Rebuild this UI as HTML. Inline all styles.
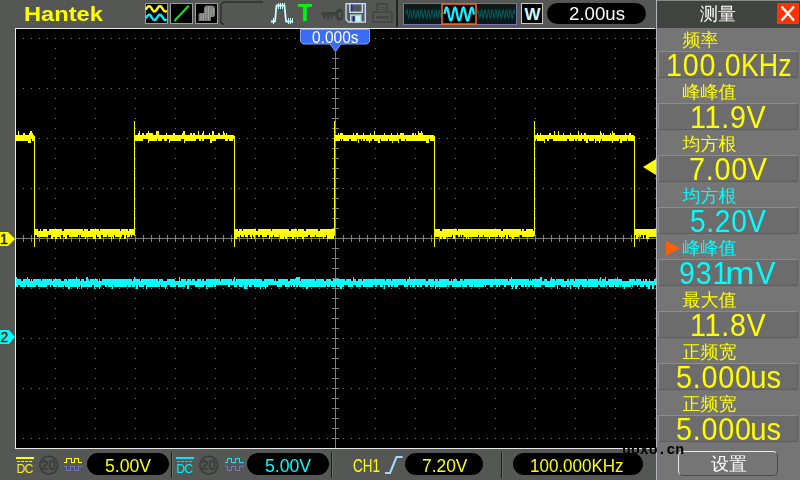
<!DOCTYPE html>
<html lang="zh-CN">
<head>
<meta charset="utf-8">
<title>Hantek</title>
<style>
*{margin:0;padding:0;box-sizing:border-box}
html,body{width:800px;height:480px;overflow:hidden;background:#555755}
body{position:relative;font-family:"Liberation Sans","Noto Sans CJK SC",sans-serif}
.abs{position:absolute}
#plot{position:absolute;left:0;top:0;width:800px;height:480px}
.t{position:absolute;white-space:nowrap;line-height:1}
#brand{top:3.900px;font-size:19.500px;line-height:21px;font-weight:bold;color:#ffff00;transform-origin:0 0}
.pill{position:absolute;background:#000;border-radius:11px;text-align:center;white-space:nowrap}
.ibox{position:absolute;top:3px;width:23px;height:21px;background:#000;border:1px solid #9a9a9a}
/* right panel */
#panel{position:absolute;left:656px;top:0;width:144px;height:480px;background:#757575;border-left:1px solid #b4b4bc}
#ptitle{position:absolute;left:0;top:0;width:143px;height:28px;background:#40443f;border-top:1px solid #8a8a8a}
.lbl{position:absolute;left:25.5px;font-size:18px;line-height:18px;color:#ffff00;white-space:nowrap;font-family:"Liberation Sans","WenQuanYi Zen Hei","Noto Sans CJK SC",sans-serif}
.vbox{position:absolute;left:1px;width:140px;height:27px;background:#6c6c6c;border-top:1px solid #8c8c8c;border-left:1px solid #8c8c8c;border-bottom:1px solid #5e5e5e;border-right:1px solid #5e5e5e;text-align:center;overflow:visible}
.val{position:absolute;left:0;top:-2px;font-size:31px;line-height:32px;color:#ffff00;white-space:nowrap;transform-origin:0 0}
.vn{letter-spacing:0.800px}
.u{display:inline-block;letter-spacing:0;transform-origin:0 0}
.cy{color:#00ffff}
.pb{top:456px;font-size:18px;line-height:20px;transform-origin:0 0}
.pt{font-size:17.500px;line-height:19px;transform-origin:0 0}
#p1{left:104.81px;transform:scaleX(0.9806)}
#p2{left:264.82px;transform:scaleX(0.9801)}
#p3{left:421.64px;transform:scaleX(0.9655)}
#p4{left:530.20px;transform:scaleX(0.9449)}
#ch{left:352.52px;transform:scaleX(0.7467)}
#tp{left:569.14px;transform:scaleX(1.0662)}
#tl{left:311.94px;transform:scaleX(0.9391)}
#brand{left:23.75px;transform:scaleX(1.2129)}
#v1a{left:6.67px;transform:scaleX(0.9250)}
#v1b{margin-left:-0.10px;transform:scaleX(0.9342);visibility:visible}
#v2a{left:31.19px;transform:scaleX(0.9250)}
#v2b{margin-left:-0.33px;transform:scaleX(1.0007);visibility:visible}
#v3a{left:30.16px;transform:scaleX(0.9298)}
#v3b{margin-left:-0.57px;transform:scaleX(1.0124);visibility:visible}
#v4a{left:30.73px;transform:scaleX(0.9051)}
#v4b{margin-left:-0.28px;transform:scaleX(1.0108);visibility:visible}
#v5a{left:19.68px;transform:scaleX(0.9250)}
#v5b{margin-left:-4.23px;transform:scaleX(1.2269);visibility:visible}
#v6a{left:31.19px;transform:scaleX(0.9250)}
#v6b{margin-left:-0.33px;transform:scaleX(1.0007);visibility:visible}
#v7a{left:16.53px;transform:scaleX(0.9286)}
#v7b{margin-left:-1.65px;transform:scaleX(1.0156);visibility:visible}
#v8a{left:16.53px;transform:scaleX(0.9286)}
#v8b{margin-left:-1.65px;transform:scaleX(1.0156);visibility:visible}
#v5c{margin-left:7.67px;transform:scaleX(1.0259);visibility:visible}
</style>
</head>
<body>
<svg id="plot" width="800" height="480" viewBox="0 0 800 480" shape-rendering="crispEdges">
  <rect x="16" y="29" width="640" height="419" fill="#000"/>
  <!-- grid dots -->
  <g stroke="#7e7e7e" stroke-width="1" fill="none">
    <path stroke-dasharray="1 7" d="M23 38.5H655M23 88.5H655M23 138.5H655M23 188.5H655M23 288.5H655M23 338.5H655M23 388.5H655M23 438.5H655"/>
    <path stroke-dasharray="1 9" d="M55.5 48V430M95.5 48V430M135.5 48V430M175.5 48V430M215.5 48V430M255.5 48V430M295.5 48V430M375.5 48V430M415.5 48V430M455.5 48V430M495.5 48V430M535.5 48V430M575.5 48V430M615.5 48V430M655.5 38V440"/>
  </g>
  <!-- axes -->
  <g stroke="#808080" stroke-width="1" fill="none">
    <path d="M16 238.5H656M335.5 52V448"/>
    <path stroke-dasharray="1 7" stroke-width="7" d="M23 238.5H655"/>
    <path stroke-dasharray="1 9" stroke-width="7" d="M335.5 58V440"/>
  </g>
  <!-- border -->
  <path d="M15.5 28V448.5H656M15 28.5H655" stroke="#e8e8e8" stroke-width="1" fill="none"/>
  <!-- waves -->
  <g transform="translate(0.5 0)">
  <path d="M16 277v10M17 279v8M18 279v6M19 279v6M20 279v8M21 281v6M22 281v6M23 279v8M24 279v8M25 279v8M26 279v6M27 277v10M28 279v8M29 279v8M30 281v6M31 279v8M32 281v6M33 279v8M34 279v8M35 279v8M36 279v6M37 279v6M38 279v8M39 279v8M40 279v8M41 281v6M42 279v8M43 279v8M44 279v8M45 279v8M46 279v8M47 279v6M48 279v6M49 279v6M50 279v8M51 279v6M52 281v4M53 279v8M54 279v8M55 279v8M56 279v8M57 279v6M58 279v8M59 279v8M60 279v8M61 281v6M62 281v6M63 281v6M64 279v6M65 279v8M66 279v8M67 281v6M68 279v10M69 279v10M70 279v8M71 279v8M72 279v8M73 279v8M74 279v8M75 279v8M76 277v10M77 279v10M78 279v8M79 279v8M80 281v4M81 279v10M82 279v8M83 279v8M84 281v6M85 281v6M86 277v10M87 277v10M88 279v8M89 281v6M90 279v8M91 279v8M92 279v6M93 279v6M94 279v10M95 279v8M96 279v8M97 279v8M98 281v6M99 279v10M100 281v6M101 281v4M102 279v6M103 279v6M104 279v6M105 279v8M106 279v8M107 279v6M108 279v8M109 279v8M110 279v8M111 279v8M112 279v10M113 279v6M114 279v8M115 279v8M116 279v8M117 279v8M118 279v8M119 279v8M120 279v8M121 279v8M122 279v8M123 279v8M124 279v8M125 279v8M126 279v8M127 279v6M128 279v8M129 279v8M130 279v8M131 279v6M132 281v6M133 279v8M134 277v10M135 279v6M136 279v10M137 279v10M138 279v6M139 279v8M140 281v6M141 279v8M142 279v8M143 279v8M144 279v6M145 279v6M146 279v10M147 279v8M148 279v8M149 279v8M150 279v8M151 279v8M152 279v8M153 279v8M154 279v8M155 279v8M156 279v8M157 279v8M158 281v6M159 279v8M160 279v6M161 279v8M162 279v8M163 281v6M164 281v6M165 281v8M166 281v6M167 279v6M168 279v6M169 279v6M170 279v8M171 279v8M172 279v8M173 279v8M174 279v8M175 281v6M176 281v4M177 281v4M178 281v6M179 277v10M180 281v6M181 279v8M182 279v8M183 279v8M184 279v8M185 279v6M186 281v4M187 279v10M188 279v10M189 279v6M190 279v6M191 281v4M192 279v6M193 279v6M194 279v6M195 281v6M196 281v6M197 279v8M198 279v8M199 279v8M200 279v8M201 281v6M202 279v8M203 279v8M204 281v4M205 281v4M206 279v10M207 279v8M208 279v8M209 279v8M210 279v8M211 279v8M212 279v8M213 279v6M214 279v8M215 279v8M216 279v6M217 279v6M218 279v6M219 279v6M220 281v4M221 279v6M222 279v6M223 279v6M224 279v6M225 279v6M226 279v6M227 279v6M228 279v8M229 279v8M230 279v6M231 279v6M232 281v4M233 279v6M234 277v10M235 281v6M236 279v8M237 279v6M238 279v6M239 279v8M240 279v8M241 279v8M242 279v8M243 279v6M244 279v10M245 279v10M246 279v10M247 279v8M248 279v6M249 279v8M250 279v8M251 279v8M252 279v6M253 279v6M254 279v8M255 279v8M256 279v8M257 279v8M258 279v8M259 279v8M260 279v10M261 279v8M262 281v6M263 281v6M264 279v8M265 279v10M266 279v8M267 279v8M268 279v6M269 279v6M270 279v6M271 279v6M272 279v6M273 279v6M274 281v4M275 279v6M276 281v4M277 281v6M278 279v8M279 279v8M280 279v8M281 279v8M282 279v6M283 279v6M284 279v6M285 279v8M286 279v8M287 279v8M288 281v6M289 281v6M290 279v6M291 279v8M292 279v6M293 279v8M294 279v8M295 279v6M296 277v10M297 277v10M298 277v8M299 277v10M300 281v6M301 279v8M302 279v8M303 279v8M304 279v8M305 279v8M306 279v10M307 279v10M308 279v8M309 279v8M310 279v8M311 279v8M312 279v8M313 279v8M314 279v8M315 281v6M316 279v8M317 279v8M318 279v8M319 279v8M320 279v8M321 279v8M322 279v8M323 279v8M324 281v6M325 281v6M326 279v6M327 279v8M328 279v8M329 279v8M330 279v6M331 281v6M332 281v6M333 279v8M334 279v8M335 279v8M336 279v6M337 279v8M338 279v8M339 279v8M340 279v10M341 279v10M342 279v8M343 279v8M344 279v6M345 281v4M346 279v6M347 279v6M348 279v8M349 279v8M350 279v8M351 281v6M352 281v6M353 277v8M354 279v6M355 279v6M356 281v6M357 281v6M358 279v8M359 279v8M360 279v8M361 279v6M362 281v4M363 279v8M364 279v8M365 279v8M366 279v8M367 279v8M368 279v8M369 279v8M370 279v8M371 279v8M372 279v8M373 279v6M374 279v6M375 279v8M376 279v8M377 279v6M378 279v6M379 279v6M380 279v8M381 279v8M382 279v8M383 279v6M384 279v10M385 281v4M386 279v6M387 279v6M388 279v8M389 279v8M390 279v6M391 281v6M392 279v8M393 279v6M394 279v8M395 279v8M396 279v8M397 279v8M398 279v6M399 279v6M400 279v6M401 279v6M402 279v6M403 279v6M404 279v8M405 279v8M406 281v6M407 279v8M408 279v6M409 277v8M410 279v8M411 279v6M412 279v8M413 279v8M414 279v8M415 279v6M416 279v6M417 279v8M418 279v8M419 279v6M420 279v8M421 279v8M422 279v6M423 279v6M424 279v6M425 279v8M426 281v6M427 281v6M428 279v6M429 279v6M430 279v8M431 279v8M432 279v8M433 279v8M434 281v4M435 279v10M436 279v8M437 279v8M438 281v6M439 279v8M440 279v8M441 279v8M442 279v8M443 279v8M444 279v8M445 279v8M446 279v8M447 279v6M448 279v8M449 281v4M450 281v4M451 279v6M452 281v6M453 279v8M454 279v8M455 279v8M456 279v8M457 281v6M458 281v6M459 281v6M460 279v8M461 279v6M462 279v8M463 281v6M464 279v8M465 279v8M466 279v8M467 279v6M468 279v6M469 279v8M470 279v8M471 279v8M472 279v8M473 279v6M474 279v8M475 279v8M476 279v8M477 279v8M478 279v8M479 279v8M480 279v8M481 279v8M482 279v8M483 279v8M484 279v6M485 279v8M486 279v6M487 279v6M488 279v6M489 279v6M490 279v8M491 279v8M492 279v8M493 279v6M494 279v6M495 279v6M496 279v8M497 279v8M498 279v6M499 279v8M500 279v6M501 279v6M502 279v6M503 279v6M504 279v8M505 279v8M506 279v6M507 279v6M508 281v4M509 279v6M510 279v6M511 277v10M512 279v10M513 279v8M514 279v6M515 279v10M516 279v10M517 279v8M518 279v6M519 279v6M520 279v6M521 279v8M522 279v8M523 279v8M524 279v6M525 279v8M526 279v8M527 279v6M528 279v8M529 281v6M530 279v6M531 281v4M532 279v8M533 279v6M534 279v8M535 279v8M536 279v8M537 279v8M538 279v8M539 279v8M540 277v10M541 277v8M542 281v4M543 281v4M544 279v6M545 279v8M546 279v8M547 281v6M548 281v6M549 281v6M550 279v8M551 277v10M552 279v8M553 279v8M554 279v8M555 281v4M556 279v6M557 279v10M558 279v6M559 279v6M560 279v6M561 279v8M562 279v8M563 279v8M564 281v6M565 281v6M566 281v4M567 279v8M568 279v8M569 281v4M570 279v10M571 279v6M572 279v6M573 279v8M574 281v6M575 279v8M576 279v8M577 279v8M578 279v10M579 279v8M580 279v6M581 279v6M582 279v8M583 279v8M584 279v8M585 279v8M586 279v8M587 281v4M588 279v8M589 279v8M590 279v8M591 279v8M592 279v8M593 279v8M594 279v8M595 279v8M596 279v8M597 279v8M598 281v4M599 279v6M600 277v10M601 281v6M602 279v8M603 279v8M604 279v8M605 277v8M606 281v6M607 281v4M608 279v6M609 279v8M610 279v8M611 279v8M612 279v8M613 279v8M614 279v6M615 279v8M616 279v8M617 277v10M618 279v8M619 279v6M620 279v8M621 279v6M622 281v6M623 281v6M624 281v8M625 281v6M626 281v6M627 281v6M628 281v6M629 279v8M630 279v8M631 279v6M632 279v8M633 279v6M634 279v6M635 281v4M636 279v6M637 279v8M638 279v6M639 279v6M640 279v8M641 281v6M642 281v6M643 279v8M644 281v4M645 279v6M646 279v8M647 281v6M648 281v8M649 279v10M650 281v4M651 281v4M652 281v8M653 281v8M654 279v6M655 279v6" stroke="#00ffff" stroke-width="1" fill="none"/>
  <path d="M16 135v6M17 135v6M18 131v10M19 135v6M20 135v6M21 135v6M22 135v6M23 133v8M24 133v8M25 135v6M26 135v6M27 135v6M28 135v8M29 133v10M30 131v12M31 131v8M32 133v8M33 135v6M35 229v6M36 229v6M37 229v8M38 231v6M39 231v6M40 229v8M41 231v6M42 231v6M43 229v8M44 229v8M45 229v8M46 229v8M47 231v6M48 231v4M49 229v6M50 229v6M51 229v10M52 229v10M53 229v8M54 229v8M55 229v10M56 229v10M57 229v8M58 229v8M59 229v8M60 229v10M61 229v6M62 231v4M63 231v6M64 229v8M65 229v10M66 229v10M67 229v6M68 229v6M69 229v8M70 229v8M71 229v8M72 229v8M73 229v8M74 229v8M75 229v8M76 229v8M77 229v8M78 229v6M79 229v6M80 229v6M81 229v8M82 229v8M83 231v6M84 229v8M85 229v10M86 229v8M87 229v8M88 231v6M89 231v6M90 229v8M91 229v8M92 229v8M93 229v10M94 229v10M95 229v10M96 229v6M97 229v8M98 229v8M99 231v8M100 229v10M101 229v6M102 229v6M103 229v8M104 229v8M105 229v8M106 229v8M107 229v6M108 229v8M109 229v8M110 229v8M111 229v10M112 229v8M113 229v10M114 229v6M115 229v8M116 229v8M117 229v8M118 229v8M119 229v8M120 231v8M121 229v8M122 229v6M123 229v6M124 229v10M125 229v10M126 229v6M127 229v8M128 231v6M129 229v8M130 229v6M131 229v8M132 229v6M133 229v6M135 135v6M136 135v6M137 135v6M138 133v8M139 131v10M140 135v6M141 135v6M142 133v8M143 133v6M144 135v4M145 135v4M146 133v6M147 133v6M148 131v12M149 133v8M150 133v8M151 133v8M152 133v8M153 135v6M154 135v6M155 135v6M156 131v10M157 131v8M158 131v10M159 135v6M160 135v6M161 135v6M162 135v4M163 135v4M164 135v6M165 135v6M166 133v8M167 135v4M168 135v4M169 135v8M170 135v6M171 135v6M172 135v6M173 133v8M174 133v8M175 135v6M176 135v6M177 135v6M178 135v6M179 135v6M180 135v6M181 135v4M182 133v6M183 131v8M184 131v12M185 135v6M186 135v6M187 135v6M188 135v6M189 135v6M190 133v8M191 133v8M192 135v6M193 133v8M194 133v8M195 135v6M196 135v4M197 135v4M198 131v8M199 135v6M200 135v6M201 135v4M202 133v8M203 131v10M204 135v4M205 135v4M206 135v4M207 135v4M208 135v4M209 133v6M210 135v8M211 135v8M212 131v10M213 131v10M214 135v6M215 135v6M216 135v4M217 135v4M218 133v6M219 133v6M220 135v4M221 135v4M222 135v4M223 131v8M224 133v6M225 135v6M226 133v8M227 135v6M228 135v4M229 135v6M230 135v6M231 135v6M232 135v6M233 135v4M235 229v10M236 229v10M237 229v8M238 231v6M239 229v8M240 229v6M241 229v8M242 231v6M243 229v8M244 229v6M245 229v8M246 229v8M247 229v8M248 229v6M249 229v6M250 229v8M251 229v10M252 229v6M253 229v8M254 229v10M255 229v6M256 231v4M257 231v4M258 229v8M259 229v8M260 229v6M261 229v6M262 229v8M263 229v8M264 229v8M265 229v8M266 229v8M267 229v6M268 229v6M269 229v10M270 229v8M271 231v6M272 229v8M273 229v6M274 229v8M275 229v8M276 229v8M277 229v8M278 229v8M279 229v6M280 229v10M281 229v10M282 229v10M283 229v10M284 229v8M285 229v10M286 229v10M287 229v8M288 229v8M289 231v6M290 231v6M291 229v8M292 229v10M293 229v10M294 229v8M295 229v8M296 229v8M297 231v8M298 229v8M299 229v8M300 229v8M301 229v8M302 229v10M303 229v10M304 231v6M305 231v6M306 229v8M307 229v8M308 229v6M309 229v6M310 229v8M311 229v8M312 229v8M313 229v8M314 229v8M315 229v6M316 229v8M317 229v8M318 231v6M319 231v6M320 229v8M321 229v8M322 229v8M323 229v10M324 229v8M325 229v8M326 229v6M327 229v10M328 229v10M329 229v10M330 229v10M331 229v10M332 229v10M333 229v10M335 135v6M336 135v6M337 135v6M338 133v8M339 135v6M340 133v6M341 133v8M342 133v6M343 135v6M344 135v6M345 135v6M346 135v6M347 135v6M348 135v6M349 135v4M350 135v4M351 135v6M352 135v6M353 133v8M354 135v6M355 135v6M356 133v8M357 133v6M358 135v8M359 135v4M360 135v4M361 135v6M362 135v4M363 133v8M364 135v6M365 135v4M366 135v6M367 135v6M368 135v6M369 135v8M370 133v8M371 135v6M372 135v4M373 135v4M374 131v10M375 135v6M376 135v6M377 135v6M378 135v8M379 135v8M380 135v4M381 135v6M382 135v6M383 135v6M384 133v8M385 135v6M386 135v6M387 135v6M388 135v4M389 135v6M390 135v6M391 133v8M392 135v8M393 135v6M394 135v6M395 135v6M396 135v6M397 133v8M398 135v8M399 135v4M400 133v6M401 133v8M402 133v8M403 133v8M404 135v6M405 135v4M406 135v6M407 135v6M408 135v6M409 135v6M410 135v6M411 135v6M412 133v8M413 133v8M414 135v6M415 133v8M416 135v6M417 135v6M418 131v10M419 133v8M420 133v8M421 131v10M422 133v8M423 135v6M424 135v6M425 135v6M426 135v8M427 135v8M428 135v8M429 135v4M430 135v6M431 135v6M432 135v6M433 135v6M435 229v8M436 229v8M437 229v8M438 229v8M439 229v8M440 231v8M441 231v8M442 229v8M443 229v10M444 229v10M445 229v10M446 229v8M447 229v8M448 229v8M449 229v8M450 229v8M451 229v8M452 229v6M453 229v10M454 229v10M455 229v6M456 229v6M457 231v4M458 229v8M459 229v8M460 229v6M461 229v8M462 229v6M463 229v6M464 229v8M465 229v8M466 229v10M467 229v8M468 229v10M469 229v8M470 229v8M471 229v8M472 229v8M473 229v8M474 229v8M475 229v8M476 229v8M477 229v8M478 229v6M479 229v8M480 229v8M481 229v8M482 229v8M483 229v6M484 229v8M485 229v8M486 229v8M487 229v8M488 229v8M489 229v10M490 229v8M491 229v8M492 229v8M493 229v8M494 229v8M495 229v8M496 229v8M497 229v8M498 229v6M499 229v8M500 229v8M501 231v8M502 231v6M503 229v8M504 229v8M505 229v6M506 229v10M507 229v10M508 229v6M509 229v8M510 229v8M511 229v8M512 229v10M513 229v10M514 229v8M515 229v8M516 229v8M517 229v8M518 229v8M519 229v6M520 229v6M521 231v4M522 229v8M523 229v8M524 231v6M525 231v6M526 229v8M527 229v8M528 229v8M529 229v8M530 229v8M531 229v8M532 229v8M533 231v6M535 135v6M536 135v4M537 133v8M538 135v6M539 135v6M540 133v8M541 135v6M542 135v6M543 135v6M544 135v8M545 135v4M546 135v4M547 135v6M548 135v6M549 133v6M550 133v6M551 135v4M552 135v4M553 135v6M554 131v10M555 135v6M556 135v6M557 135v6M558 131v10M559 135v6M560 135v6M561 135v6M562 135v6M563 133v8M564 135v6M565 135v6M566 135v6M567 135v4M568 135v4M569 135v6M570 133v8M571 135v6M572 135v6M573 135v6M574 135v4M575 135v6M576 135v6M577 135v4M578 131v10M579 135v6M580 135v6M581 133v8M582 135v4M583 135v4M584 133v8M585 133v8M586 135v8M587 135v8M588 135v4M589 135v6M590 135v6M591 135v6M592 135v6M593 135v6M594 135v4M595 135v8M596 135v6M597 135v6M598 135v6M599 135v8M600 131v10M601 133v6M602 135v6M603 133v8M604 135v6M605 135v6M606 135v6M607 135v6M608 135v6M609 135v6M610 133v8M611 135v6M612 131v12M613 133v8M614 133v8M615 135v6M616 135v6M617 135v6M618 135v6M619 135v4M620 135v8M621 135v8M622 135v6M623 135v6M624 135v6M625 133v8M626 135v6M627 135v4M628 135v6M629 133v8M630 133v8M631 135v6M632 135v6M633 135v6M635 229v6M636 229v10M637 229v10M638 229v8M639 229v6M640 229v8M641 229v6M642 229v6M643 229v10M644 229v6M645 229v6M646 229v10M647 229v10M648 229v10M649 229v8M650 229v8M651 229v8M652 229v8M653 229v8M654 229v8M655 229v8M34 136v111M134 121v115M234 136v111M334 121v115M434 136v111M534 121v115M634 136v111" stroke="#ffff00" stroke-width="1" fill="none"/>
  </g>
  <!-- channel markers -->
  <polygon points="0,232 8,232 15,239 8,246 0,246" fill="#ffff00" shape-rendering="auto"/>
  <polygon points="0,330 9,330 15,337 9,344 0,344" fill="#00ffff" shape-rendering="auto"/>
  <!-- trigger level arrow -->
  <polygon points="643,167 656,159 656,175" fill="#ffff00" shape-rendering="auto"/>
  <!-- time marker -->
  <g shape-rendering="auto">
  <polygon points="300.5,29.5 369.5,29.5 369.5,41.5 367,44 341,44 335.5,51.5 330,44 303,44 300.5,41.5" fill="#3c6cf4" stroke="#78a8ff" stroke-width="1"/>
  </g>
</svg>
<div class="t" style="left:0px;top:232px;font-size:14px;color:#1c1c40;line-height:15px;-webkit-text-stroke:0.500px #1c1c40">1</div>
<div class="t" style="left:0.500px;top:330px;font-size:14px;color:#4a2c1c;line-height:15px;-webkit-text-stroke:0.500px #4a2c1c">2</div>
<div class="t" id="tl" style="top:28.700px;font-size:16.500px;line-height:17px;color:#fff;transform-origin:0 0">0.000s</div>

<div class="t" id="brand">Hantek</div>

<!-- top icons -->
<svg class="abs" style="left:0;top:0" width="800" height="28" viewBox="0 0 800 28">
  <!-- icon boxes -->
  <g shape-rendering="crispEdges">
    <rect x="145.5" y="3.5" width="22" height="20" fill="#000" stroke="#9c9c9c"/>
    <rect x="170.5" y="3.5" width="22" height="20" fill="#000" stroke="#9c9c9c"/>
    <rect x="195.5" y="3.5" width="22" height="20" fill="#000" stroke="#9c9c9c"/>
  </g>
  <path d="M146.4 8.8L146.9 8.0L147.4 7.3L147.9 6.7L148.4 6.3L148.9 6.1L149.4 6.1L149.9 6.4L150.4 6.8L150.9 7.4L151.4 8.2L151.9 9.0L152.4 9.7L152.9 10.4L153.4 11.0L153.9 11.3L154.4 11.5L154.9 11.4L155.4 11.1L155.9 10.7L156.4 10.0L156.9 9.3L157.4 8.5L157.9 7.7L158.4 7.1L158.9 6.5L159.4 6.2L159.9 6.1L160.4 6.2L160.9 6.5L161.4 7.1L161.9 7.7L162.4 8.5L162.9 9.3L163.4 10.0L163.9 10.7L164.4 11.1L164.9 11.4L165.4 11.5L165.9 11.3" stroke="#ffff00" stroke-width="2.4" fill="none" stroke-linecap="round"/>
  <path d="M146.4 17.4L146.9 16.6L147.4 15.9L147.9 15.3L148.4 14.9L148.9 14.7L149.4 14.7L149.9 15.0L150.4 15.4L150.9 16.0L151.4 16.8L151.9 17.6L152.4 18.3L152.9 19.0L153.4 19.6L153.9 19.9L154.4 20.1L154.9 20.0L155.4 19.7L155.9 19.3L156.4 18.6L156.9 17.9L157.4 17.1L157.9 16.3L158.4 15.7L158.9 15.1L159.4 14.8L159.9 14.7L160.4 14.8L160.9 15.1L161.4 15.7L161.9 16.3L162.4 17.1L162.9 17.9L163.4 18.6L163.9 19.3L164.4 19.7L164.9 20.0L165.4 20.1L165.9 19.9" stroke="#00f0ff" stroke-width="2.4" fill="none" stroke-linecap="round"/>
  <path d="M175 20.300L188.200 6.200" stroke="#00f010" stroke-width="2" stroke-linecap="round" fill="none"/>
  <defs><filter id="bl" x="-20%" y="-20%" width="140%" height="140%"><feGaussianBlur stdDeviation="0.55"/></filter></defs>
  <g filter="url(#bl)">
    <path d="M198.500 21V14.500c0-1 1-1.500 2-1.500h3.500V9c0-2 1-3.500 3-3.500h5c2 0 3 1 3 3v6.500c0 1.500-1 2-2.500 2H211v3c0 .600-.400 1-1 1z" fill="#7a7a7a"/>
    <path d="M201 20v-6M203.500 20V13M206 18V7M208.500 20V6M211 17V6.500M213.500 15V8" stroke="#a8a8a8" stroke-width="0.900" fill="none"/>
  </g>
  <!-- empty inset -->
  <path d="M224 24.500a3.500 3.500 0 0 1 -3-3.500V6a4 4 0 0 1 4-4H263" stroke="#2e302e" stroke-width="1.500" fill="none"/>
  <!-- pulse icon -->
  <g stroke="#c8ffff" fill="none">
    <path d="M271 21.500H275L276.500 5.500H284.500L286 21.500H292.500" stroke-width="1.800" stroke-linejoin="round"/>
    <path d="M273.500 18v6M278.500 3v6M280.500 3v6M282.500 3v6M284.500 3v5M288.500 18v6M290.500 18v6M292.500 18v5" stroke-width="1" shape-rendering="crispEdges"/>
  </g>
  <!-- key -->
  <g fill="#3e403e" stroke="none">
    <rect x="322" y="12" width="15" height="3.400"/>
    <path d="M320.500 13.700L323 12V15.400z"/>
    <rect x="323.500" y="14" width="2.200" height="4.800"/><rect x="327" y="14" width="2.200" height="5.800"/><rect x="330.500" y="14" width="2.200" height="4.800"/>
    <path d="M339.500 8.700c-2.500 0-4.300 2.500-4.300 6s1.800 6 4.300 6s4-2.500 4-6s-1.500-6-4-6zm0.300 3.300c0.800 0 1.300 1.200 1.300 2.700s-.5 2.700-1.300 2.700s-1.300-1.200-1.300-2.700s.5-2.700 1.300-2.700z" fill-rule="evenodd"/>
  </g>
  <!-- floppy -->
  <g fill="none" stroke="#6464cc" stroke-width="0.900">
    <path d="M347 4.700H364.300V21.200H349L347 19.200Z"/>
    <path d="M350.800 4V11.400H361.400V4"/>
    <path d="M351.700 22V16.300H359.800"/>
  </g>
  <g fill="none" stroke="#c8e8e4" stroke-width="1.300">
    <path d="M346 3.700H365.300V22.100H348.500L346 19.600Z"/>
    <path d="M349.800 3.700V12.400H362.400V3.700"/>
    <path d="M350.700 22V15.200H360.900V22"/>
  </g>
  <rect x="355.200" y="15.800" width="5.200" height="6" fill="#c0f8f8"/>
  <rect x="351" y="4.600" width="1.400" height="6.600" fill="#2420a8"/>
  <rect x="353" y="16.300" width="1.500" height="5.200" fill="#2420a8"/>
  <!-- printer -->
  <g stroke="#464846" fill="none" shape-rendering="crispEdges">
    <path d="M377 12V4H387V12" stroke-width="2"/>
    <path d="M379 7H385M379 9.500H385" stroke-width="1"/>
    <rect x="373" y="12" width="19" height="10" rx="2" stroke-width="2"/>
    <path d="M376 17.500H389" stroke-width="3"/>
  </g>
  <!-- separator -->
  <rect x="396" y="0" width="2" height="27" fill="#242624"/>
  <!-- overview -->
  <g shape-rendering="crispEdges">
    <rect x="403.500" y="3.500" width="113" height="21" fill="#0e1a1a" stroke="#7474a8"/>
  </g>
  <path d="M406.0 14.0L406.4 10.8L406.9 9.5L407.3 10.8L407.8 14.0L408.2 17.2L408.7 18.5L409.1 17.2L409.6 14.0L410.0 10.8L410.5 9.5L410.9 10.8L411.4 14.0L411.8 17.2L412.3 18.5L412.7 17.2L413.2 14.0L413.6 10.8L414.1 9.5L414.5 10.8L415.0 14.0L415.4 17.2L415.9 18.5L416.3 17.2L416.8 14.0L417.2 10.8L417.7 9.5L418.1 10.8L418.6 14.0L419.0 17.2L419.5 18.5L419.9 17.2L420.4 14.0L420.8 10.8L421.3 9.5L421.7 10.8L422.2 14.0L422.6 17.2L423.1 18.5L423.5 17.2L424.0 14.0L424.4 10.8L424.9 9.5L425.3 10.8L425.8 14.0L426.2 17.2L426.7 18.5L427.1 17.2L427.6 14.0L428.0 10.8L428.5 9.5L428.9 10.8L429.4 14.0L429.8 17.2L430.3 18.5L430.7 17.2L431.2 14.0L431.6 10.8L432.1 9.5L432.5 10.8L433.0 14.0L433.4 17.2L433.9 18.5L434.3 17.2L434.8 14.0L435.2 10.8L435.7 9.5L436.1 10.8L436.6 14.0L437.0 17.2L437.5 18.5L437.9 17.2L438.4 14.0L438.8 10.8L439.3 9.5L439.7 10.8L440.2 14.0L440.6 17.2M477.0 14.0L477.4 10.8L477.9 9.5L478.3 10.8L478.8 14.0L479.2 17.2L479.7 18.5L480.1 17.2L480.6 14.0L481.0 10.8L481.5 9.5L481.9 10.8L482.4 14.0L482.8 17.2L483.3 18.5L483.7 17.2L484.2 14.0L484.6 10.8L485.1 9.5L485.5 10.8L486.0 14.0L486.4 17.2L486.9 18.5L487.3 17.2L487.8 14.0L488.2 10.8L488.7 9.5L489.1 10.8L489.6 14.0L490.0 17.2L490.5 18.5L490.9 17.2L491.4 14.0L491.8 10.8L492.3 9.5L492.7 10.8L493.2 14.0L493.6 17.2L494.1 18.5L494.5 17.2L495.0 14.0L495.4 10.8L495.9 9.5L496.3 10.8L496.8 14.0L497.2 17.2L497.7 18.5L498.1 17.2L498.6 14.0L499.0 10.8L499.5 9.5L499.9 10.8L500.4 14.0L500.8 17.2L501.3 18.5L501.7 17.2L502.2 14.0L502.6 10.8L503.1 9.5L503.5 10.8L504.0 14.0L504.4 17.2L504.9 18.5L505.3 17.2L505.8 14.0L506.2 10.8L506.7 9.5L507.1 10.8L507.6 14.0L508.0 17.2L508.5 18.5L508.9 17.2L509.4 14.0L509.8 10.8L510.3 9.5L510.7 10.8L511.2 14.0L511.6 17.2L512.1 18.5L512.5 17.2L513.0 14.0L513.4 10.8L513.9 9.5L514.3 10.8L514.8 14.0" stroke="#005e5e" stroke-width="1" fill="none"/>
  <rect x="442" y="4" width="34" height="20" fill="#000" stroke="#ff6a10" stroke-width="1.500"/>
  <path d="M444.5 14.0L445.0 11.6L445.5 9.6L446.0 8.1L446.5 7.5L447.0 7.8L447.5 8.9L448.0 10.7L448.5 13.0L449.0 15.4L449.5 17.7L450.0 19.4L450.5 20.3L451.0 20.4L451.5 19.6L452.0 18.1L452.5 15.9L453.0 13.5L453.5 11.2L454.0 9.2L454.5 7.9L455.0 7.5L455.5 7.9L456.0 9.2L456.5 11.2L457.0 13.5L457.5 15.9L458.0 18.1L458.5 19.6L459.0 20.4L459.5 20.3L460.0 19.4L460.5 17.7L461.0 15.4L461.5 13.0L462.0 10.8L462.5 8.9L463.0 7.8L463.5 7.5L464.0 8.1L464.5 9.6L465.0 11.6L465.5 14.0L466.0 16.4L466.5 18.4L467.0 19.9L467.5 20.5L468.0 20.2L468.5 19.1L469.0 17.3L469.5 15.0L470.0 12.6L470.5 10.3L471.0 8.6L471.5 7.7L472.0 7.6L472.5 8.4L473.0 9.9L473.5 12.1L474.0 14.5" stroke="#10f0ff" stroke-width="2.300" fill="none"/>
  <!-- W box -->
  <rect x="521.500" y="3.500" width="21" height="20" fill="#000" stroke="#c8c8c8" shape-rendering="crispEdges"/>
</svg>
<div class="t" style="left:298px;top:1px;font-size:23px;line-height:24px;font-weight:bold;color:#00f810">T</div>
<div class="t" style="left:523px;top:4.500px;width:19px;text-align:center;font-size:17px;line-height:20px;font-weight:bold;color:#d0ffff">W</div>
<!-- pills top -->
<div class="pill" style="left:547px;top:3px;width:99px;height:21px"></div>
<div class="t pt" id="tp" style="top:5px;color:#fff">2.00us</div>

<!-- bottom bar -->
<svg class="abs" style="left:0;top:449px" width="656" height="31" viewBox="0 449 656 31">
  <g id="chg1">
    <g shape-rendering="crispEdges">
      <rect x="16" y="457" width="18" height="2" fill="#ffff00"/>
      <path d="M17 461.500h3m1 0h3m1 0h3m1 0h3" stroke="#f0f020" stroke-width="1"/>
    </g>
    <circle cx="48.800" cy="465.200" r="8.900" fill="none" stroke="#3c3e3c" stroke-width="1.900"/>
    <path d="M64 462.500H66.500V458.500H71.500V462.500H74.500V458.500H78.500V462.500H82" stroke="#ffff00" stroke-width="1.500" fill="none" shape-rendering="crispEdges"/>
    <path d="M64 466.500H66.500V470.500H70.500V466.500H74.500V470.500H78.500V466.500H82" stroke="#7474c4" stroke-width="1.500" fill="none" shape-rendering="crispEdges"/>
  </g>
  <g id="chg2" transform="translate(160 0)">
    <g shape-rendering="crispEdges">
      <rect x="16" y="457" width="18" height="2" fill="#00e8ff"/>
      <path d="M17 461.500h3m1 0h3m1 0h3m1 0h3" stroke="#00e0f0" stroke-width="1"/>
    </g>
    <circle cx="48.800" cy="465.200" r="8.900" fill="none" stroke="#3c3e3c" stroke-width="1.900"/>
    <path d="M65 462.500H67.500V458.500H71.500V462.500H75.500V458.500H79.500V462.500H83.500" stroke="#00e8ff" stroke-width="1.500" fill="none" shape-rendering="crispEdges"/>
    <path d="M65 466.500H67.500V470.500H71.500V466.500H75.500V470.500H79.500V466.500H83.500" stroke="#7474c4" stroke-width="1.500" fill="none" shape-rendering="crispEdges"/>
  </g>
  <g shape-rendering="crispEdges">
    <rect x="171" y="452" width="1" height="26" fill="#1a1c1a"/><rect x="172" y="452" width="1" height="26" fill="#6a6c68"/>
    <rect x="331" y="452" width="1" height="26" fill="#1a1c1a"/><rect x="332" y="452" width="1" height="26" fill="#6a6c68"/>
    <rect x="501" y="452" width="1" height="26" fill="#1a1c1a"/><rect x="502" y="452" width="1" height="26" fill="#6a6c68"/>
  </g>
  <path d="M385 473H390L396.500 457H402.500" stroke="#a8d8ff" stroke-width="2" fill="none" stroke-linejoin="round"/>
</svg>
<div class="t" style="left:16.500px;top:463px;font-size:12px;line-height:12px;color:#f0f020;letter-spacing:-0.6px">DC</div>
<div class="t" style="left:176.500px;top:463px;font-size:12px;line-height:12px;color:#00e8ff;letter-spacing:-0.6px">DC</div>
<div class="t" style="left:40.800px;top:457.500px;font-size:14px;line-height:15px;color:#3a3c3a;font-weight:bold;letter-spacing:-0.3px">20</div>
<div class="t" style="left:200.800px;top:457.500px;font-size:14px;line-height:15px;color:#3a3c3a;font-weight:bold;letter-spacing:-0.3px">20</div>
<div class="pill" style="left:87px;top:453px;width:82px;height:22px"></div>
<div class="pill" style="left:247px;top:453px;width:82px;height:22px"></div>
<div class="pill" style="left:405px;top:453px;width:78px;height:22px"></div>
<div class="pill" style="left:513px;top:453px;width:130px;height:22px"></div>
<div class="t pb" id="p1" style="color:#ffff00">5.00V</div>
<div class="t pb" id="p2" style="color:#00ffff">5.00V</div>
<div class="t pb" id="p3" style="color:#ffff00">7.20V</div>
<div class="t pb" id="p4" style="color:#ffff00">100.000KHz</div>
<div class="t pb" id="ch" style="color:#ffff00">CH1</div>

<!-- right panel -->
<div id="panel">
  <div id="ptitle"></div>
  <div class="t" style="left:43px;top:5px;font-size:18px;line-height:18px;color:#fff;font-family:'Liberation Sans','WenQuanYi Zen Hei','Noto Sans CJK SC',sans-serif">测量</div>
  <div class="abs" style="left:120px;top:3px;width:22px;height:21px;background:#ff3200"><svg width="22" height="21" viewBox="0 0 22 21"><path d="M4.500 3.500L17 17.500M17 3.500L4.500 17.500" stroke="#fff" stroke-width="2.400" fill="none"/></svg></div>

  <div class="lbl" style="top:31px">频率</div>
  <div class="vbox" style="top:51px"><div id="v1a" class="val vn">100.0<span id="v1b" class="u">KHz</span></div></div>
  <div class="lbl" style="top:83px">峰峰值</div>
  <div class="vbox" style="top:103px"><div id="v2a" class="val vn">11.9<span id="v2b" class="u">V</span></div></div>
  <div class="lbl" style="top:135px">均方根</div>
  <div class="vbox" style="top:155px"><div id="v3a" class="val vn">7.00<span id="v3b" class="u">V</span></div></div>
  <div class="lbl cy" style="top:187px">均方根</div>
  <div class="vbox" style="top:207px"><div id="v4a" class="val vn cy">5.20<span id="v4b" class="u">V</span></div></div>
  <div class="lbl cy" style="top:239px">峰峰值</div>
  <div class="vbox" style="top:259px"><div id="v5a" class="val vn cy">931<span id="v5b" class="u">m</span><span id="v5c" class="u">V</span></div></div>
  <div class="lbl" style="top:291px">最大值</div>
  <div class="vbox" style="top:311px"><div id="v6a" class="val vn">11.8<span id="v6b" class="u">V</span></div></div>
  <div class="lbl" style="top:343px">正频宽</div>
  <div class="vbox" style="top:363px"><div id="v7a" class="val vn">5.000<span id="v7b" class="u">us</span></div></div>
  <div class="lbl" style="top:395px">正频宽</div>
  <div class="vbox" style="top:415px"><div id="v8a" class="val vn">5.000<span id="v8b" class="u">us</span></div></div>
  <svg class="abs" style="left:9px;top:239.500px" width="15" height="16" viewBox="0 0 15 16"><polygon points="0,0.800 14,8.200 0,15.600" fill="#ff6000"/></svg>
  <div class="abs" style="left:21px;top:451px;width:100px;height:25px;border:1px solid #e8e8e8;border-right-color:#4a4a4a;border-bottom-color:#4a4a4a;border-radius:5px"></div>
  <div class="t" style="left:54px;top:455px;font-size:18px;line-height:18px;color:#fff;font-family:'Liberation Sans','WenQuanYi Zen Hei','Noto Sans CJK SC',sans-serif">设置</div>
</div>
<div class="t" style="left:622px;top:443.300px;font-size:14.500px;line-height:15px;font-weight:bold;color:#000;font-family:'Liberation Mono',monospace;transform-origin:0 0;transform:scaleX(1.02)">uoxo.cn</div>
</body>
</html>
